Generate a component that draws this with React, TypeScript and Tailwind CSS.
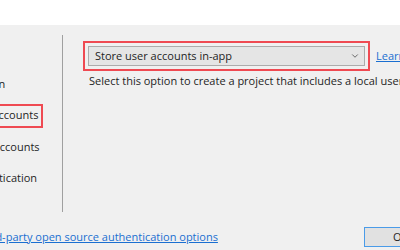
import { ChevronDown } from "lucide-react"

const authOptions = [
    { label: "No Authentication", selected: false },
    { label: "Individual User Accounts", selected: true },
    { label: "Work or School Accounts", selected: false },
    { label: "Windows Authentication", selected: false },
]

export default function App() {
    return (
        <div className="h-[250px] w-[400px] overflow-hidden bg-[#f0f0f0] font-['Open_Sans',sans-serif] text-[11px] text-[#1e1e1e]">
            <div className="flex w-[460px] flex-col">
                <div className="h-[25px] bg-white" />

                <div className="flex pt-[10px]">
                    {/* auth type list, cut off on the left */}
                    <div className="w-[62px] shrink-0">
                        <div className="-ml-[94px] flex w-[137px] flex-col gap-[7.5px] pt-[37px]">
                            {authOptions.map((option) => (
                                <div
                                    key={option.label}
                                    className={
                                        option.selected
                                            ? "flex h-[24px] items-center whitespace-nowrap border-2 border-[#ef4a52] pl-[4px]"
                                            : "flex h-[24px] items-center whitespace-nowrap border-2 border-transparent pl-[4px]"
                                    }
                                >
                                    {option.label}
                                </div>
                            ))}
                        </div>
                    </div>

                    <div className="h-[177px] w-px shrink-0 bg-[#a0a0a0]" />

                    <div className="flex flex-col pl-[20px] pt-[6px]">
                        <div className="flex items-center gap-[6px]">
                            <div className="w-[287px] border-2 border-[#ef4a52] p-[3px]">
                                <div className="flex h-[20px] items-center justify-between border border-[#acacac] bg-[#e5e5e5] pl-[6px] pr-[4px]">
                                    <span>Store user accounts in-app</span>
                                    <ChevronDown className="h-[10px] w-[10px] text-[#505050]" strokeWidth={2} />
                                </div>
                            </div>
                            <a className="whitespace-nowrap text-[#1a6fd1] underline">Learn more</a>
                        </div>
                        <p className="ml-[6px] mt-[2px] whitespace-nowrap leading-[16px]">
                            Select this option to create a project that includes a local user account store.
                        </p>
                    </div>
                </div>

                <div className="mt-[15px] flex items-center">
                    <div className="w-[364px] shrink-0">
                        <a className="-ml-[118px] block whitespace-nowrap text-[#1a6fd1] underline">
                            Learn more about third-party open source authentication options
                        </a>
                    </div>
                    <button className="h-[20px] w-[75px] border border-[#4a9be8] bg-[#e1e1e1] pl-[28px] text-left">
                        OK
                    </button>
                </div>
            </div>
        </div>
    )
}
